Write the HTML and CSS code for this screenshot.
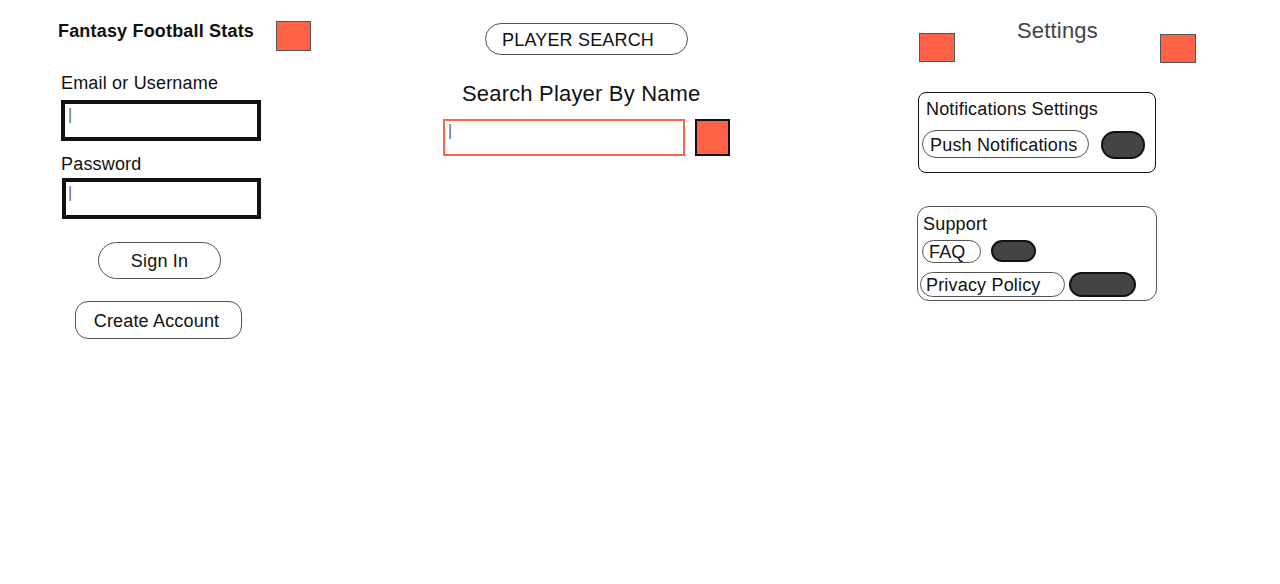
FILE: index.html
```html
<!DOCTYPE html>
<html lang="en">
<head>
<meta charset="utf-8">
<title>Fantasy Football Stats</title>
<link rel="stylesheet" href="styles.css">
</head>
<body>
<div class="page">
  <section class="col col-login">
    <div class="brand">
      <h1 class="brand-title">Fantasy Football Stats</h1>
      <div class="swatch swatch-brand"></div>
    </div>
    <label class="field-label label-email">Email or Username</label>
    <div class="text-input input-email"><span class="caret">|</span></div>
    <label class="field-label label-pass">Password</label>
    <div class="text-input input-pass"><span class="caret">|</span></div>
    <button class="btn btn-signin">Sign In</button>
    <button class="btn btn-create">Create Account</button>
  </section>

  <section class="col col-search">
    <div class="search-tab">PLAYER SEARCH</div>
    <h2 class="search-heading">Search Player By Name</h2>
    <div class="search-row">
      <div class="search-input"><span class="caret">|</span></div>
      <div class="search-go"></div>
    </div>
  </section>

  <section class="col col-settings">
    <div class="settings-head">
      <div class="swatch swatch-left"></div>
      <h2 class="settings-title">Settings</h2>
      <div class="swatch swatch-right"></div>
    </div>
    <div class="panel panel-notify">
      <div class="panel-title notify-title">Notifications Settings</div>
      <div class="opt-row notify-row">
        <div class="chip chip-push">Push Notifications</div>
        <div class="toggle toggle-push"></div>
      </div>
    </div>
    <div class="panel panel-support">
      <div class="panel-title support-title">Support</div>
      <div class="opt-row faq-row">
        <div class="chip chip-faq">FAQ</div>
        <div class="toggle toggle-faq"></div>
      </div>
      <div class="opt-row privacy-row">
        <div class="chip chip-privacy">Privacy Policy</div>
        <div class="toggle toggle-privacy"></div>
      </div>
    </div>
  </section>
</div>
</body>
</html>
```

FILE: styles.css
```css
* { box-sizing: border-box; }

html, body {
  margin: 0;
  padding: 0;
  background: #ffffff;
}

body {
  font-family: "Liberation Sans", Arial, sans-serif;
  color: #111111;
  font-size: 18px;
  letter-spacing: 0.18px;
  width: 1280px;
  height: 584px;
  overflow: hidden;
}

.page {
  display: flex;
  align-items: flex-start;
}

.col {
  display: flex;
  flex-direction: column;
  align-items: flex-start;
}

/* ---------- login column ---------- */
.col-login {
  margin-left: 58px;
  width: 385px;
  padding-top: 20px;
}

.brand {
  display: flex;
  align-items: flex-start;
}

.brand-title {
  margin: 0;
  width: 218px;
  padding-top: 1px;
  font-size: 18px;
  font-weight: bold;
  line-height: 21px;
}

.swatch {
  background: #ff6347;
  border: 1px solid #555555;
}

.swatch-brand {
  width: 35px;
  height: 30px;
  margin-top: 1px;
}

.field-label {
  display: block;
  font-size: 18px;
  line-height: 21px;
  margin-left: 3px;
}

.label-email { margin-top: 22px; }
.label-pass { margin-top: 13px; }

.text-input {
  border: 4px solid #111111;
  height: 41px;
  padding-left: 3px;
  padding-top: 2px;
}

.input-email {
  width: 200px;
  margin-top: 6px;
  margin-left: 3px;
}

.input-pass {
  width: 199px;
  margin-top: 3px;
  margin-left: 4px;
  padding-left: 2px;
}

.caret {
  display: block;
  font-size: 16px;
  line-height: 18px;
  color: #666666;
}

.btn {
  display: flex;
  align-items: center;
  justify-content: center;
  font-family: "Liberation Sans", Arial, sans-serif;
  font-size: 18px;
  letter-spacing: 0.18px;
  color: #111111;
  background: #ffffff;
  border: 1px solid #555555;
  padding: 2px 0 0 0;
}

.btn-signin {
  width: 123px;
  height: 37px;
  border-radius: 19px;
  margin-top: 23px;
  margin-left: 40px;
}

.btn-create {
  width: 167px;
  height: 38px;
  border-radius: 13px;
  margin-top: 22px;
  margin-left: 17px;
  padding-right: 4px;
}

/* ---------- search column ---------- */
.col-search {
  width: 474px;
}

.search-tab {
  display: flex;
  align-items: center;
  width: 203px;
  height: 32px;
  margin-top: 23px;
  margin-left: 42px;
  padding-left: 16px;
  padding-top: 3px;
  border: 1px solid #555555;
  border-radius: 16px;
  font-size: 18px;
}

.search-heading {
  margin: 26px 0 0 19px;
  font-size: 22px;
  font-weight: normal;
  line-height: 26px;
}

.search-row {
  display: flex;
  gap: 10px;
  margin-top: 12px;
}

.search-input {
  width: 242px;
  height: 37px;
  border: 2px solid #ff6347;
  padding-left: 3px;
  padding-top: 1px;
}

.search-go {
  width: 35px;
  height: 37px;
  background: #ff6347;
  border: 2px solid #111111;
}

/* ---------- settings column ---------- */
.col-settings {
  width: 363px;
}

.settings-head {
  display: flex;
  align-items: flex-start;
  margin-top: 16px;
}

.swatch-left {
  width: 36px;
  height: 29px;
  margin-top: 17px;
  margin-left: 2px;
}

.settings-title {
  margin: 0;
  width: 205px;
  padding-left: 62px;
  padding-top: 2px;
  font-size: 22px;
  font-weight: normal;
  line-height: 26px;
  color: #444444;
}

.swatch-right {
  width: 36px;
  height: 29px;
  margin-top: 18px;
}

.panel {
  background: #ffffff;
}

.panel-notify {
  width: 238px;
  height: 81px;
  margin-top: 29px;
  margin-left: 1px;
  border: 1px solid #111111;
  border-radius: 8px;
  padding-top: 5px;
}

.panel-title {
  font-size: 18px;
  line-height: 22px;
}

.notify-title { padding-left: 7px; }

.opt-row {
  display: flex;
  align-items: flex-start;
}

.notify-row {
  margin-top: 10px;
  margin-left: 3px;
}

.chip {
  display: flex;
  align-items: center;
  border: 1px solid #555555;
  font-size: 18px;
  background: #ffffff;
  padding-top: 2px;
}

.chip-push {
  width: 167px;
  height: 28px;
  border-radius: 14px;
  padding-left: 7px;
}

.toggle {
  background: #444444;
  border: 2px solid #111111;
}

.toggle-push {
  width: 44px;
  height: 28px;
  border-radius: 14px;
  margin-top: 1px;
  margin-left: 12px;
}

.panel-support {
  width: 240px;
  height: 95px;
  margin-top: 33px;
  border: 1px solid #555555;
  border-radius: 12px;
  padding-top: 6px;
}

.support-title { padding-left: 5px; }

.faq-row {
  margin-top: 5px;
  margin-left: 4px;
}

.chip-faq {
  width: 59px;
  height: 23px;
  border-radius: 12px;
  padding-left: 6px;
}

.toggle-faq {
  width: 45px;
  height: 22px;
  border-radius: 11px;
  margin-left: 10px;
}

.privacy-row {
  margin-top: 9px;
  margin-left: 2px;
}

.chip-privacy {
  width: 145px;
  height: 25px;
  border-radius: 13px;
  padding-left: 5px;
}

.toggle-privacy {
  width: 67px;
  height: 25px;
  border-radius: 13px;
  margin-left: 4px;
}
```
